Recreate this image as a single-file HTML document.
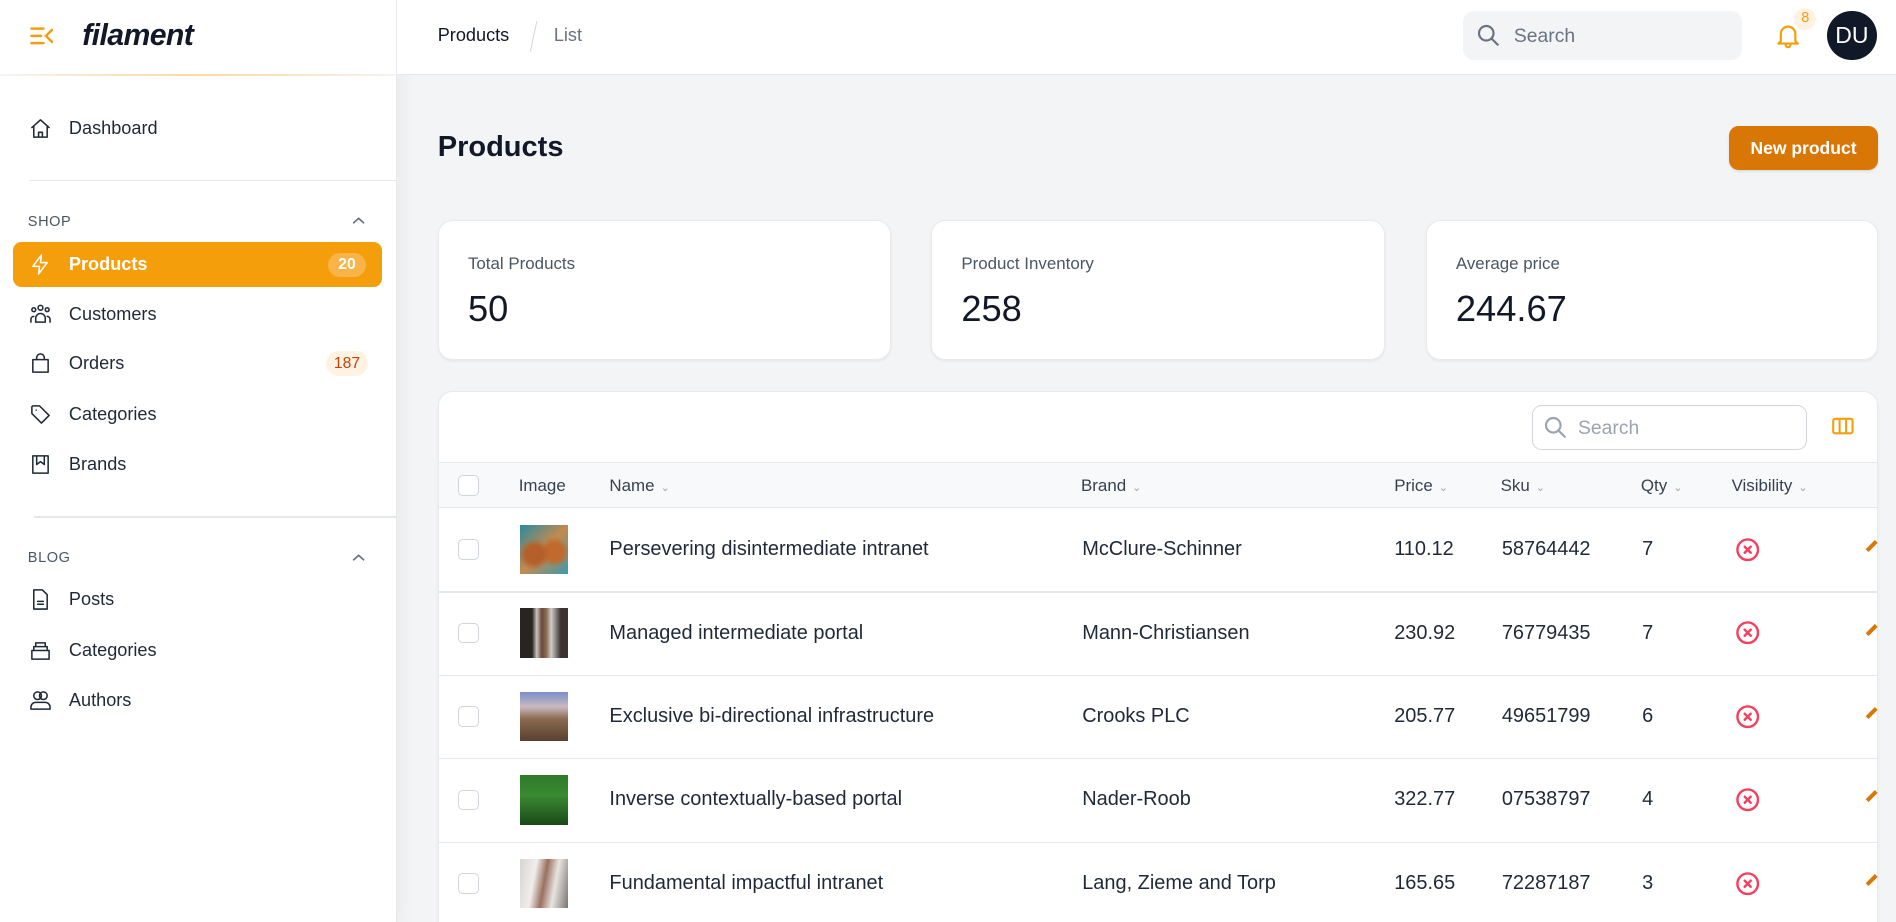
<!DOCTYPE html>
<html><head><meta charset="utf-8"><style>
*{box-sizing:border-box;margin:0;padding:0}
html,body{width:1896px;height:922px;overflow:hidden;background:#f3f4f6}
body{font-family:"Liberation Sans",sans-serif;color:#111827}
#r{zoom:1.2092;width:1568px;height:763px;position:relative;background:#f3f4f6;overflow:hidden}
.a{position:absolute}
.side{left:0;top:0;width:328px;height:763px;background:#fff;border-right:1px solid #e5e7eb;box-shadow:4px 0 14px rgba(0,0,0,.04)}
.top{left:328px;top:0;width:1240px;height:62px;background:#fff;border-bottom:1px solid #e5e7eb}
.nav{left:24px;font-size:15px;color:#1f2937;display:flex;align-items:center;gap:14px;height:20px}
.nav svg{width:19px;height:19px;fill:none;stroke:#1f2937;stroke-width:1.6;stroke-linecap:round;stroke-linejoin:round}
.grp{left:23px;font-size:12px;color:#4b5563;letter-spacing:.5px}
.hr{height:1px;background:#e5e7eb}
.card{background:#fff;border-radius:12px;box-shadow:0 1px 2px rgba(0,0,0,.06);border:1px solid #e9eaec}
.lbl{font-size:14px;color:#4b5563}
.val{font-size:30px;color:#111827}
.th{font-size:14px;color:#374151;top:394px}
.cv{font-size:9px;color:#9ca3af;margin-left:5px}
.cb{width:17px;height:17px;border:1px solid #d1d5db;border-radius:4px;background:#fff}
.td{font-size:16.5px;color:#1f2937}
.img{width:40px;height:41px}
</style></head><body><div id="r">
<div class="a side"></div>
<div class="a" style="left:0;top:61px;width:328px;height:2px;background:linear-gradient(90deg,#f3f4f6,#fcd9a0 50%,#f3f4f6)"></div>
<div class="a top"></div>
<svg class="a" style="left:24px;top:21px" width="22" height="18" viewBox="0 0 22 18" fill="none" stroke="#f59e0b" stroke-width="2" stroke-linecap="round"><path d="M2 3h10M2 9h8M2 15h10M19 4l-5 5 5 5"/></svg>
<div class="a" style="left:68px;top:16px;font-size:25px;font-weight:bold;font-style:italic;letter-spacing:-.5px;color:#111827">filament</div>
<div class="a" style="left:362px;top:21px;font-size:15px;color:#111827">Products</div>
<div class="a" style="left:441px;top:17px;width:1px;height:26px;background:#d1d5db;transform:rotate(12deg)"></div>
<div class="a" style="left:458px;top:21px;font-size:15px;color:#6b7280">List</div>
<div class="a" style="left:1210px;top:9px;width:231px;height:41px;background:#f3f4f6;border-radius:9px"></div>
<svg class="a" style="left:1221px;top:19px" width="20" height="20" viewBox="0 0 20 20" fill="none" stroke="#6b7280" stroke-width="1.8" stroke-linecap="round"><circle cx="8.5" cy="8.5" r="6"/><path d="M13 13l5 5"/></svg>
<div class="a" style="left:1252px;top:21px;font-size:16px;color:#6b7280">Search</div>
<svg class="a" style="left:1469px;top:19px" width="20" height="22" viewBox="0 0 20 22" fill="none" stroke="#f59e0b" stroke-width="1.8" stroke-linecap="round" stroke-linejoin="round"><path d="M4 15V9a6 6 0 0112 0v6l2 2H2z M8 18a2 2 0 004 0"/></svg>
<div class="a" style="left:1484px;top:7px;width:18px;height:18px;border-radius:9px;background:#fef3e2;color:#f59e0b;font-size:12px;text-align:center;line-height:18px">8</div>
<div class="a" style="left:1511px;top:9px;width:41px;height:41px;border-radius:50%;background:#111827;color:#fff;font-size:19px;text-align:center;line-height:41px">DU</div>
<div class="a nav" style="top:96px"><svg viewBox="0 0 24 24"><path d="M3 11l9-8 9 8M5 9.5V21h14V9.5M10 21v-5h4v5"/></svg>Dashboard</div>
<div class="a hr" style="left:24px;top:149px;width:304px"></div>
<div class="a grp" style="top:177px">SHOP</div>
<svg class="a" style="left:291px;top:179px" width="11" height="8" viewBox="0 0 11 8" fill="none" stroke="#6b7280" stroke-width="1.4"><path d="M1 6l4.5-4 4.5 4"/></svg>
<div class="a" style="left:11px;top:200px;width:305px;height:37px;background:#f59e0b;border-radius:7px"></div>
<div class="a nav" style="top:209px;color:#fff;font-weight:bold"><svg viewBox="0 0 24 24" style="stroke:#fff"><path d="M13 2L4 14h7l-1 8 9-12h-7z"/></svg>Products</div>
<div class="a" style="left:271px;top:209px;width:32px;height:20px;border-radius:10px;background:#f8b449;color:#fff;font-size:13px;text-align:center;line-height:20px;font-weight:bold">20</div>
<div class="a nav" style="top:250px"><svg viewBox="0 0 24 24"><circle cx="12" cy="5" r="2.5"/><circle cx="5" cy="7" r="2"/><circle cx="19" cy="7" r="2"/><path d="M7 20v-4a5 5 0 0110 0v4zM2 20v-3a3 3 0 013-3M22 20v-3a3 3 0 00-3-3"/></svg>Customers</div>
<div class="a nav" style="top:291px"><svg viewBox="0 0 24 24"><path d="M4 8h16v13H4zM8 8V6a4 4 0 018 0v2"/></svg>Orders</div>
<div class="a" style="left:270px;top:290px;width:34px;height:21px;border-radius:11px;background:#fef3e2;color:#c2410c;font-size:13px;text-align:center;line-height:21px">187</div>
<div class="a nav" style="top:333px"><svg viewBox="0 0 24 24"><path d="M3 4v7l10 10 8-8L11 3H4zM7.5 7.5h.01"/></svg>Categories</div>
<div class="a nav" style="top:374px"><svg viewBox="0 0 24 24"><path d="M4 3h16v18H4zM8 3v9l4-3 4 3V3"/></svg>Brands</div>
<div class="a hr" style="left:28px;top:427px;width:300px"></div>
<div class="a grp" style="top:455px">BLOG</div>
<svg class="a" style="left:291px;top:457px" width="11" height="8" viewBox="0 0 11 8" fill="none" stroke="#6b7280" stroke-width="1.4"><path d="M1 6l4.5-4 4.5 4"/></svg>
<div class="a nav" style="top:486px"><svg viewBox="0 0 24 24"><path d="M5 2h9l5 5v15H5zM9 14h6M9 17h6"/></svg>Posts</div>
<div class="a nav" style="top:528px"><svg viewBox="0 0 24 24"><path d="M3 12h18v9H3zM5 12V8h14v4M7 8V4h10v4"/></svg>Categories</div>
<div class="a nav" style="top:569px"><svg viewBox="0 0 24 24"><circle cx="9" cy="7" r="4"/><circle cx="15" cy="7" r="4"/><path d="M2 21v-2a5 5 0 015-5h10a5 5 0 015 5v2z"/></svg>Authors</div>
<div class="a" style="left:362px;top:108px;font-size:24px;font-weight:bold;color:#111827">Products</div>
<div class="a" style="left:1430px;top:104px;width:123px;height:37px;background:#d97706;border-radius:8px;color:#fff;font-weight:bold;font-size:14.5px;text-align:center;line-height:37px;box-shadow:0 1px 2px rgba(0,0,0,.1)">New product</div>
<div class="a card" style="left:362px;top:182px;width:375px;height:116px"></div>
<div class="a card" style="left:770px;top:182px;width:375px;height:116px"></div>
<div class="a card" style="left:1179px;top:182px;width:374px;height:116px"></div>
<div class="a lbl" style="left:387px;top:210px">Total Products</div><div class="a val" style="left:387px;top:238px">50</div>
<div class="a lbl" style="left:795px;top:210px">Product Inventory</div><div class="a val" style="left:795px;top:238px">258</div>
<div class="a lbl" style="left:1204px;top:210px">Average price</div><div class="a val" style="left:1204px;top:238px">244.67</div>
<div class="a card" style="left:362px;top:323px;width:1191px;height:460px;overflow:hidden"></div>
<div class="a" style="left:1267px;top:335px;width:227px;height:37px;border:1px solid #d1d5db;border-radius:8px;background:#fff"></div>
<svg class="a" style="left:1276px;top:343px" width="20" height="20" viewBox="0 0 20 20" fill="none" stroke="#9ca3af" stroke-width="1.8" stroke-linecap="round"><circle cx="8.5" cy="8.5" r="6"/><path d="M13 13l5 5"/></svg>
<div class="a" style="left:1305px;top:345px;font-size:16px;color:#9ca3af">Search</div>
<svg class="a" style="left:1515px;top:345px" width="18" height="15" viewBox="0 0 18 15" fill="none" stroke="#f59e0b" stroke-width="1.7"><rect x="1" y="1.5" width="16" height="12" rx="1.5"/><path d="M6.3 1.5v12M11.7 1.5v12"/></svg>
<div class="a" style="left:363px;top:382px;width:1189px;height:38px;background:#f8f9fa;border-top:1px solid #e5e7eb;border-bottom:1px solid #e5e7eb"></div>
<div class="a cb" style="left:379px;top:393px"></div>
<div class="a th" style="left:429px">Image</div>
<div class="a th" style="left:504px">Name<span class="cv">⌄</span></div>
<div class="a th" style="left:894px">Brand<span class="cv">⌄</span></div>
<div class="a th" style="left:1153px">Price<span class="cv">⌄</span></div>
<div class="a th" style="left:1241px">Sku<span class="cv">⌄</span></div>
<div class="a th" style="left:1357px">Qty<span class="cv">⌄</span></div>
<div class="a th" style="left:1432px">Visibility<span class="cv">⌄</span></div>
<div class="a hr" style="left:363px;top:489px;width:1189px"></div>
<div class="a hr" style="left:363px;top:558px;width:1189px"></div>
<div class="a hr" style="left:363px;top:627px;width:1189px"></div>
<div class="a hr" style="left:363px;top:696px;width:1189px"></div>

<div class="a cb" style="left:379px;top:446px"></div>
<div class="a img" style="left:430px;top:434px;background:radial-gradient(circle at 30% 60%,#b5602a 20%,transparent 35%),radial-gradient(circle at 72% 55%,#c06a2e 20%,transparent 35%),linear-gradient(135deg,#2a8aa0,#c28a50 50%,#3b9bb0)"></div>
<div class="a td" style="left:504px;top:445px">Persevering disintermediate intranet</div>
<div class="a td" style="left:895px;top:445px">McClure-Schinner</div>
<div class="a td" style="left:1153px;top:445px">110.12</div>
<div class="a td" style="left:1242px;top:445px">58764442</div>
<div class="a td" style="left:1358px;top:445px">7</div>

<div class="a cb" style="left:379px;top:515px"></div>
<div class="a img" style="left:430px;top:503px;background:linear-gradient(90deg,#2a2420 0 25%,#c8c4c0 35%,#6b4a3a 45%,#8a6a55 55%,#d0ccc8 65%,#3a3330 85%)"></div>
<div class="a td" style="left:504px;top:514px">Managed intermediate portal</div>
<div class="a td" style="left:895px;top:514px">Mann-Christiansen</div>
<div class="a td" style="left:1153px;top:514px">230.92</div>
<div class="a td" style="left:1242px;top:514px">76779435</div>
<div class="a td" style="left:1358px;top:514px">7</div>

<div class="a cb" style="left:379px;top:584px"></div>
<div class="a img" style="left:430px;top:572px;background:linear-gradient(180deg,#7a8fc8 0,#c8b8c0 30%,#8a6a50 55%,#5a4030 100%)"></div>
<div class="a td" style="left:504px;top:583px">Exclusive bi-directional infrastructure</div>
<div class="a td" style="left:895px;top:583px">Crooks PLC</div>
<div class="a td" style="left:1153px;top:583px">205.77</div>
<div class="a td" style="left:1242px;top:583px">49651799</div>
<div class="a td" style="left:1358px;top:583px">6</div>

<div class="a cb" style="left:379px;top:653px"></div>
<div class="a img" style="left:430px;top:641px;background:linear-gradient(180deg,#2f7a2a,#3a8a30 40%,#1a4a18)"></div>
<div class="a td" style="left:504px;top:652px">Inverse contextually-based portal</div>
<div class="a td" style="left:895px;top:652px">Nader-Roob</div>
<div class="a td" style="left:1153px;top:652px">322.77</div>
<div class="a td" style="left:1242px;top:652px">07538797</div>
<div class="a td" style="left:1358px;top:652px">4</div>

<div class="a cb" style="left:379px;top:722px"></div>
<div class="a img" style="left:430px;top:710px;background:linear-gradient(100deg,#d8d4d0 0,#f0eeec 30%,#9a7060 50%,#e8e4e0 70%,#7a7470)"></div>
<div class="a td" style="left:504px;top:721px">Fundamental impactful intranet</div>
<div class="a td" style="left:895px;top:721px">Lang, Zieme and Torp</div>
<div class="a td" style="left:1153px;top:721px">165.65</div>
<div class="a td" style="left:1242px;top:721px">72287187</div>
<div class="a td" style="left:1358px;top:721px">3</div>

<svg class="a" style="left:1435px;top:444px" width="21" height="21" viewBox="0 0 21 21" fill="none" stroke="#f43f5e" stroke-width="2" stroke-linecap="round"><circle cx="10.5" cy="10.5" r="8.5"/><path d="M8 8l5 5M13 8l-5 5"/></svg>
<svg class="a" style="left:1435px;top:513px" width="21" height="21" viewBox="0 0 21 21" fill="none" stroke="#f43f5e" stroke-width="2" stroke-linecap="round"><circle cx="10.5" cy="10.5" r="8.5"/><path d="M8 8l5 5M13 8l-5 5"/></svg>
<svg class="a" style="left:1435px;top:582px" width="21" height="21" viewBox="0 0 21 21" fill="none" stroke="#f43f5e" stroke-width="2" stroke-linecap="round"><circle cx="10.5" cy="10.5" r="8.5"/><path d="M8 8l5 5M13 8l-5 5"/></svg>
<svg class="a" style="left:1435px;top:651px" width="21" height="21" viewBox="0 0 21 21" fill="none" stroke="#f43f5e" stroke-width="2" stroke-linecap="round"><circle cx="10.5" cy="10.5" r="8.5"/><path d="M8 8l5 5M13 8l-5 5"/></svg>
<svg class="a" style="left:1435px;top:720px" width="21" height="21" viewBox="0 0 21 21" fill="none" stroke="#f43f5e" stroke-width="2" stroke-linecap="round"><circle cx="10.5" cy="10.5" r="8.5"/><path d="M8 8l5 5M13 8l-5 5"/></svg>
<div class="a" style="left:1542px;top:450px;width:11px;height:3px;background:#d97706;transform:rotate(-45deg)"></div>
<div class="a" style="left:1542px;top:519px;width:11px;height:3px;background:#d97706;transform:rotate(-45deg)"></div>
<div class="a" style="left:1542px;top:588px;width:11px;height:3px;background:#d97706;transform:rotate(-45deg)"></div>
<div class="a" style="left:1542px;top:657px;width:11px;height:3px;background:#d97706;transform:rotate(-45deg)"></div>
<div class="a" style="left:1542px;top:726px;width:11px;height:3px;background:#d97706;transform:rotate(-45deg)"></div>
</div></body></html>
